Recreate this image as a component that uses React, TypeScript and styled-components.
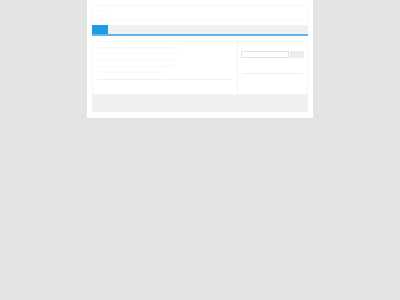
import * as React from "react";
import styled, { createGlobalStyle } from "styled-components";

const GlobalStyle = createGlobalStyle`
  html, body {
    margin: 0;
    padding: 0;
    background: #e4e4e4;
    font-family: "Liberation Sans", Arial, sans-serif;
  }
`;

const Wrapper = styled.div`
  width: 226px;
  margin: 0 auto;
  background: #fff;
  padding: 5px 5px 6px;
  box-sizing: border-box;
  display: flex;
  flex-direction: column;
  gap: 4px;
`;

const Header = styled.div`
  height: 16px;
  border: 1px solid #f7f7f7;
  box-sizing: border-box;
  padding: 3px 4px;
  font-size: 3px;
  color: #f8f8f8;
`;

const Nav = styled.div`
  display: flex;
  height: 11px;
  background: #f1f1f1;
  border-bottom: 2px solid #5cb6ea;
  box-sizing: border-box;
`;

const Tab = styled.div<{ active?: boolean }>`
  width: 16px;
  background: ${(p) => (p.active ? "#1b9de6" : "transparent")};
`;

const Content = styled.div`
  display: flex;
  height: 54px;
  border: 1px solid #f6f6f6;
  box-sizing: border-box;
  margin-top: 1px;
`;

const Main = styled.div`
  width: 145px;
  padding: 3px 4px;
  box-sizing: border-box;
  display: flex;
  flex-direction: column;
`;

const TextRow = styled.div`
  height: 6px;
  font-size: 3px;
  line-height: 6px;
  color: #f7f7f7;
  white-space: nowrap;
  overflow: hidden;
`;

const Rule = styled.div`
  height: 1px;
  background: #f2f2f2;
  margin-top: 4px;
`;

const Sidebar = styled.div`
  flex: 1;
  border-left: 1px solid #f5f5f5;
  padding: 9px 3px 0 3px;
  display: flex;
  flex-direction: column;
`;

const Search = styled.div`
  display: flex;
  gap: 1px;
  height: 7px;
`;

const SearchInput = styled.div`
  width: 48px;
  border: 1px solid #e2e2e2;
  box-sizing: border-box;
  background: #fff;
`;

const SearchButton = styled.div`
  width: 14px;
  background: #ededed;
`;

const SideRule = styled.div`
  height: 1px;
  background: #efefef;
  margin: 15px 1px 0 1px;
`;

const Footer = styled.div`
  height: 17px;
  background: #f0f0f0;
  margin-top: -4px;
`;

export default function App() {
  return (
    <>
      <GlobalStyle />
      <Wrapper>
        <Header>Site title</Header>
        <Nav>
          <Tab active />
        </Nav>
        <Content>
          <Main>
            <TextRow>Lorem ipsum dolor sit amet consectetur adipiscing elit sed do</TextRow>
            <TextRow>eiusmod tempor incididunt ut labore et dolore magna aliqua</TextRow>
            <TextRow>Ut enim ad minim veniam quis nostrud exercitation ullamco</TextRow>
            <TextRow>laboris nisi ut aliquip ex ea commodo consequat duis aute</TextRow>
            <TextRow>irure dolor in reprehenderit in voluptate velit esse</TextRow>
            <Rule />
          </Main>
          <Sidebar>
            <Search>
              <SearchInput />
              <SearchButton />
            </Search>
            <SideRule />
          </Sidebar>
        </Content>
        <Footer />
      </Wrapper>
    </>
  );
}
